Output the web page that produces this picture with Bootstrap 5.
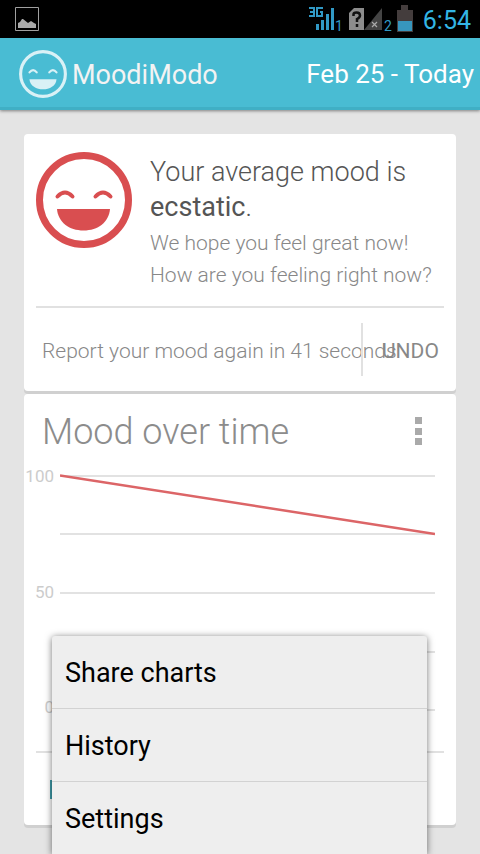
<!DOCTYPE html>
<html lang="en">
<head>
<meta charset="utf-8">
<meta name="viewport" content="width=device-width, initial-scale=1">
<title>MoodiModo</title>
<link href="https://cdn.jsdelivr.net/npm/bootstrap@5.3.0/dist/css/bootstrap.min.css" rel="stylesheet">
<style>
body { font-family: Roboto, "Noto Sans", sans-serif; background: #e4e4e4; }
.status-bar { height: 38px; background: #000; padding: 0 9px 0 15px; }
.clock { color: #33b5e5; font-size: 25px; line-height: 34px; padding-top: 4px; }
.app-bar { height: 72px; background: #49bcd3; border-bottom: 3px solid #40afc5; box-shadow: 0 1px 3px rgba(0,0,0,.45); padding: 2px 6px 0 18px; }
.app-name { color: #f3f3f3; font-size: 27px; line-height: 34px; padding-top: 2px; }
.date-range { font-size: 26px; line-height: 36px; }
.panel { border-radius: 4px; margin-bottom: 3px; box-shadow: 0 3px 0 #d0d0d0; }
.mood-summary { padding: 18px 0 16px; gap: 18px; }
.mood-title { font-size: 27px; line-height: 35px; font-weight: 300; color: #555; padding: 3px 0 1px; }
.mood-title strong { font-weight: 400; }
.mood-note { font-size: 21px; line-height: 32px; font-weight: 300; color: #888; padding-top: 1px; margin-bottom: -1px; }
.rule { height: 2px; background: #e1e1e1; }
.chart-rule { margin: 34px 12px 0; }
.report-row { height: 83px; padding-left: 6px; }
.report-text { font-size: 21px; font-weight: 300; color: #888; min-width: 0; padding-top: 4px; }
.undo { border-left: 2px solid #e1e1e1; height: 53px; width: 83px; font-size: 21px; color: #888; padding: 4px 6px 0 19px; }
.chart-title { font-size: 36px; line-height: 44px; font-weight: 300; color: #8c8c8c; padding-top: 2px; }
.chart-head { padding: 14px 33px 14px 18px; }
.chart-area { padding-right: 21px; gap: 6px; height: 249px; }
.axis { width: 30px; font-size: 17px; line-height: 16px; color: #ccc; padding-bottom: 2px; }
.plot { height: 240px; min-width: 0; }
.chart-foot { padding: 27px 26px 26px; }
.legend-key { width: 20px; height: 19px; background: #3f9eac; }
.legend-name { font-size: 17px; line-height: 19px; color: #888; }
.options { top: 242px; left: 28px; right: 29px; background: #eee; border-radius: 3px 3px 0 0; box-shadow: 0 1px 7px rgba(0,0,0,.55); }
.option { height: 73px; padding: 2px 13px 0; font-size: 27px; color: #000; background: none; border: 0; border-bottom: 1px solid #d2d2d2; }
.option:last-child { height: 72px; border-bottom: 0; }
</style>
<script src="https://cdn.jsdelivr.net/npm/bootstrap@5.3.0/dist/js/bootstrap.bundle.min.js"></script>
</head>
<body class="min-vh-100">
<div class="status-bar d-flex align-items-center justify-content-between">
  <svg width="24" height="24" viewBox="0 0 24 24" aria-hidden="true"><path d="M.5 .5h23v23H.5z" fill="none" stroke="#a0a0a0"/><path d="M3 21v-5l2-1 2-3h1l5 4 3-2 3 2 2 1v4z" fill="#aaa"/></svg>
  <div class="d-flex align-items-center">
    <svg width="106" height="28" viewBox="309 5 106 28" aria-hidden="true">
      <g fill="none" stroke="#3199c5" stroke-width="2"><path d="M309 8h5v8h-5M310 12h4M323 8h-6v8h5v-4h-2"/></g>
      <path d="M316 24h3v6h-3zM321 20h3v10h-3zM326 14h3v16h-3zM331 8h3v22h-3z" fill="#3199c5"/>
      <path d="M349 13l5-5h10v22h-15z" fill="#8c8c8c"/><path d="M364 30h18V8z" fill="#444"/>
      <path d="M353.500 16v-1.500q0-2 3-2 3.500 0 3.500 3 0 2-3 3.500v3M357 24v3" fill="none" stroke="#111" stroke-width="2.500"/>
      <path d="M372 22l5 5m0-5l-5 5" stroke="#aaa" stroke-width="1.200"/>
      <path d="M397 10h4V5h7v5h5v22h-16z" fill="#443d3d"/><path d="M398 21h14v10h-14z" fill="#3796bd"/>
      <g fill="#3199c5" font-family="Roboto, sans-serif" font-size="14"><text x="335" y="31">1</text><text x="384" y="31">2</text></g>
    </svg>
    <span class="clock ms-2">6:54</span>
  </div>
</div>
<header class="app-bar d-flex align-items-center justify-content-between">
  <div class="d-flex align-items-center gap-1">
    <svg width="50" height="50" viewBox="0 0 96 96" aria-hidden="true"><circle cx="48" cy="48" r="43" fill="none" stroke="#d9f1f6" stroke-width="6"/><path d="M22 58H74C72 84 24 84 22 58Z" fill="#d9f1f6"/><path d="M22 45q7-9 14 0M60 45q7-9 14 0" fill="none" stroke="#d9f1f6" stroke-width="4" stroke-linecap="round"/></svg>
    <span class="app-name">MoodiModo</span>
  </div>
  <button class="btn p-0 border-0 text-white date-range" type="button">Feb 25 - Today</button>
</header>
<main class="px-4 pt-4">
  <section class="panel bg-white px-2">
    <div class="px-1">
      <div class="mood-summary d-flex">
        <svg class="flex-shrink-0" width="96" height="96" viewBox="0 0 96 96" aria-hidden="true"><circle cx="48" cy="48" r="44.500" fill="none" stroke="#d94e50" stroke-width="7"/><path d="M21 57H74C73 70 62 78.500 47.500 78.500S22 70 21 57Z" fill="#d94e50"/><path d="M21.500 44.500q7.500-8 15 0M59.500 44.500q7.500-8 15 0" fill="none" stroke="#d94e50" stroke-width="4" stroke-linecap="round"/></svg>
        <div>
          <h1 class="mood-title mb-0">Your average mood is <strong>ecstatic</strong>.</h1>
          <p class="mood-note">We hope you feel great now!<br>How are you feeling right now?</p>
        </div>
      </div>
      <div class="rule"></div>
      <div class="report-row d-flex align-items-center">
        <span class="report-text flex-fill text-nowrap">Report your mood again in 41 seconds</span>
        <button class="undo btn rounded-0 border-top-0 border-end-0 border-bottom-0 text-end flex-shrink-0" type="button">UNDO</button>
      </div>
    </div>
  </section>
  <section class="panel bg-white position-relative">
    <div class="chart-head d-flex align-items-center justify-content-between">
      <h2 class="chart-title mb-0">Mood over time</h2>
      <button class="btn p-0 border-0 d-flex" type="button" aria-label="More options"><svg width="9" height="30" viewBox="0 0 9 30" fill="#aaa"><path d="M1 1h7v7H1zM1 12h7v7H1zM1 22h7v7H1z"/></svg></button>
    </div>
    <div class="chart-area d-flex">
      <div class="axis d-flex flex-column justify-content-between text-end"><span>100</span><span>50</span><span>0</span></div>
      <svg class="plot flex-fill mt-1" viewBox="0 0 375 240" preserveAspectRatio="none" role="img" aria-label="Mood falling from 100 to 75"><path d="M0 4H375M0 62H375M0 121H375M0 180H375M0 238H375" stroke="#e2e2e2" stroke-width="2"/><path d="M0 3.500L375 62" stroke="#dc6567" stroke-width="2.500"/></svg>
    </div>
    <div class="rule chart-rule"></div>
    <div class="chart-foot d-flex gap-2"><span class="legend-key"></span><span class="legend-name">Mood</span></div>
    <div class="options position-absolute d-flex flex-column">
      <button class="option text-start" type="button">Share charts</button>
      <button class="option text-start" type="button">History</button>
      <button class="option text-start" type="button">Settings</button>
    </div>
  </section>
</main>
</body>
</html>
